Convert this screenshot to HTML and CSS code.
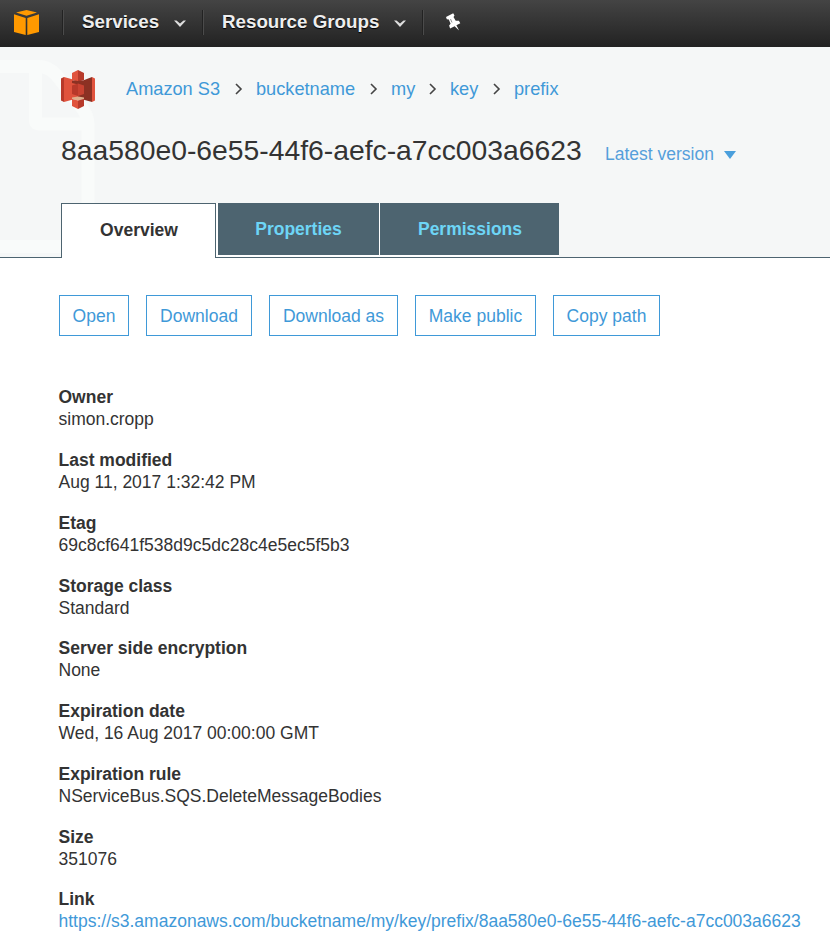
FILE: index.html
```html
<!DOCTYPE html>
<html lang="en">
<head>
<meta charset="utf-8">
<title>Amazon S3</title>
<link rel="stylesheet" href="styles.css">
</head>
<body>
<nav class="topbar">
  <a class="home"><svg width="26" height="26" viewBox="0 0 26 26"><path fill="#ff9900" d="M2 2.500 12.500 0l10.500 2.500-10.500 3.200zM0 4.300l11.700 3.800V25L0 22zM25 4.300 13.300 8.100V25L25 22z"/></svg></a>
  <a class="nav services">Services<svg width="12" height="8" viewBox="0 0 12 8"><path fill="#ddd" d="M0 .5h2.500L6 3.500 9.500.5H12L6 7z"/></svg></a>
  <a class="nav groups">Resource Groups<svg width="12" height="8" viewBox="0 0 12 8"><path fill="#ddd" d="M0 .5h2.500L6 3.500 9.500.5H12L6 7z"/></svg></a>
  <a class="nav pin"><svg width="15" height="18" viewBox="0 0 15 18"><path fill="#fff" d="M0 4 7.200.2l1.300 2.300-1 1.400 2.200 3.800h3.200l1.400 2.500-3.900 2 2.700 5.300-4.500-4.300-4.500 2.400-1-3.100 1.500-1.800L2.800 6.500.8 6.300z"/><path d="m4.500 6 1.500 3.500" stroke="#777" stroke-width=".8"/></svg></a>
</nav>
<header class="head">
  <svg class="watermark" width="96" height="196" viewBox="0 0 96 196" fill="none" stroke="#f9fbfa" stroke-width="13"><path d="M0 7.500h39q9 0 17 8l24 31q8 9 8 19V187.500H0M35.500 9v53q0 3 4 3H86"/></svg>
  <div class="crumbs">
    <svg class="s3" width="34" height="39" viewBox="0 0 34 39"><path fill="#e0533d" d="m3 7 9 2.500v20L3 32z"/><path fill="#8c3123" d="M12 10.500h10L31 7v25l-9-2.500-10-1z"/><path fill="#b8392a" d="M0 8.500 3 7v25l-3-1.500z"/><path fill="#e0533d" d="M12 12h5v16h-5zM31 7l3 1.500v22L31 32z"/><path fill="#8c3123" d="m11 11 6-1.500 6 1.500v2l-6 1.500-6-1.500z"/><path fill="#b8392a" d="m11 15.500 6-2v12.500l-6-2z"/><path fill="#c94332" d="m17 13.500 6 2V24l-6 2z"/><path fill="#e0533d" d="m11 3 6-3v11l-6-1z"/><path fill="#b83a2b" d="m17 0 6 3v7l-6 1z"/><path fill="#dfb08d" d="m11 27.500 6-1 6 1v1.500l-6 1.500-6-1.500z"/><path fill="#e0533d" d="m11 29 6 1.500V39l-6-3z"/><path fill="#b83a2b" d="m23 29-6 1.500V39l6-3z"/></svg>
    <a class="c1">Amazon S3</a><svg class="sep" width="8" height="12" viewBox="0 0 8 12"><path d="m1 1 5 5-5 5"/></svg>
    <a class="c2">bucketname</a><svg class="sep" width="8" height="12" viewBox="0 0 8 12"><path d="m1 1 5 5-5 5"/></svg>
    <a class="c3">my</a><svg class="sep" width="8" height="12" viewBox="0 0 8 12"><path d="m1 1 5 5-5 5"/></svg>
    <a class="c4">key</a><svg class="sep" width="8" height="12" viewBox="0 0 8 12"><path d="m1 1 5 5-5 5"/></svg>
    <a>prefix</a>
  </div>
  <div class="title">
    <h1>8aa580e0-6e55-44f6-aefc-a7cc003a6623</h1>
    <a class="version">Latest version<svg width="12" height="8" viewBox="0 0 12 8"><path fill="#4a9fdc" d="M0 0h12L6 8z"/></svg></a>
  </div>
  <div class="tabs">
    <a class="tab active">Overview</a>
    <div class="inactive"><a class="tab properties">Properties</a><a class="tab permissions">Permissions</a></div>
  </div>
</header>
<main>
  <div class="actions">
    <button class="b1">Open</button><button class="b2">Download</button><button class="b3">Download as</button><button class="b4">Make public</button><button class="b5">Copy path</button>
  </div>
  <dl>
    <div><dt>Owner</dt><dd>simon.cropp</dd></div>
    <div><dt>Last modified</dt><dd>Aug 11, 2017 1:32:42 PM</dd></div>
    <div><dt>Etag</dt><dd>69c8cf641f538d9c5dc28c4e5ec5f5b3</dd></div>
    <div><dt>Storage class</dt><dd>Standard</dd></div>
    <div><dt>Server side encryption</dt><dd>None</dd></div>
    <div><dt>Expiration date</dt><dd>Wed, 16 Aug 2017 00:00:00 GMT</dd></div>
    <div><dt>Expiration rule</dt><dd>NServiceBus.SQS.DeleteMessageBodies</dd></div>
    <div><dt>Size</dt><dd>351076</dd></div>
    <div><dt>Link</dt><dd><a>https://s3.amazonaws.com/bucketname/my/key/prefix/8aa580e0-6e55-44f6-aefc-a7cc003a6623</a></dd></div>
  </dl>
</main>
</body>
</html>
```
FILE: styles.css
```css
* { box-sizing: border-box; }
body { margin: 0; height: 943px; overflow: hidden; background: #fff; color: #333; font: 17.5px/22px "Liberation Sans", Arial, sans-serif; }
a { color: #3f99d8; white-space: nowrap; }
svg { display: block; flex: none; }

.topbar { display: flex; align-items: flex-start; height: 47px; padding-top: 10px; background: linear-gradient(#444, #222); }
.home { width: 62px; padding-left: 14px; }
.nav { display: flex; height: 25px; border-left: 1px solid #222; box-shadow: inset 1px 0 #4b4b4b; color: #eee; font-weight: bold; font-size: 18.75px; line-height: 24px; text-shadow: 0 1px 1px #000; }
.nav svg { margin: 10px 0 0 15px; }
.services { width: 140px; padding-left: 19px; }
.groups { width: 220px; padding-left: 19px; }
.pin { padding-left: 8px; }
.nav.pin svg { margin: 3px 0 0 15px; }

.head { position: relative; height: 211px; background: #f5f7f7; border-bottom: 1px solid #4d6470; }
.watermark { position: absolute; left: 0; top: 12px; }
.crumbs { position: relative; display: flex; height: 84px; padding-left: 61px; align-items: center; font-size: 18.2px; }
.s3 { margin: 1px 31px 0 0; }
.sep { margin: 0 13px 0 14px; fill: none; stroke: #444; stroke-width: 1.6; }
.c1 { width: 95px; }
.c2 { width: 100px; }
.c3 { width: 24px; }
.c4 { width: 29px; }
.title { position: relative; display: flex; height: 72px; padding-left: 61px; }
h1 { width: 544px; margin: 0; font-size: 28.3px; line-height: 38px; font-weight: normal; }
.version { display: flex; padding-top: 12px; font-size: 17.5px; color: #559fdb; }
.version svg { margin: 8px 0 0 10px; }
.tabs { position: relative; display: flex; padding-left: 61px; }
.tab { display: block; height: 52px; text-align: center; line-height: 53px; font-weight: bold; color: #6dd5f6; background: #4d6470; }
.tab.active { width: 155px; height: 55px; padding-left: 1px; border: 1px solid #4d6470; border-bottom: 0; color: #333; background: #fff; }
.inactive { display: flex; gap: 1px; height: 54px; padding-left: 2px; background: #fff; width: 343px; }
.properties { width: 161px; }
.permissions { width: 179px; padding-left: 1px; }

.actions { display: flex; gap: 17px; margin: 37px 0 0 59px; }
button { height: 41px; padding: 1px 0 0; border: 1px solid #3f99d8; background: #fff; color: #3f99d8; font: 17.5px "Liberation Sans", Arial, sans-serif; white-space: nowrap; }
.b1 { width: 70px; }
.b2 { width: 106px; }
.b3 { width: 129px; }
.b4 { width: 121px; }
.b5 { width: 107px; }
dl { margin: 50.300px 0 0 58.500px; }
dl div { height: 62.750px; }
dt { font-weight: bold; }
dd { margin: 0; }
```
